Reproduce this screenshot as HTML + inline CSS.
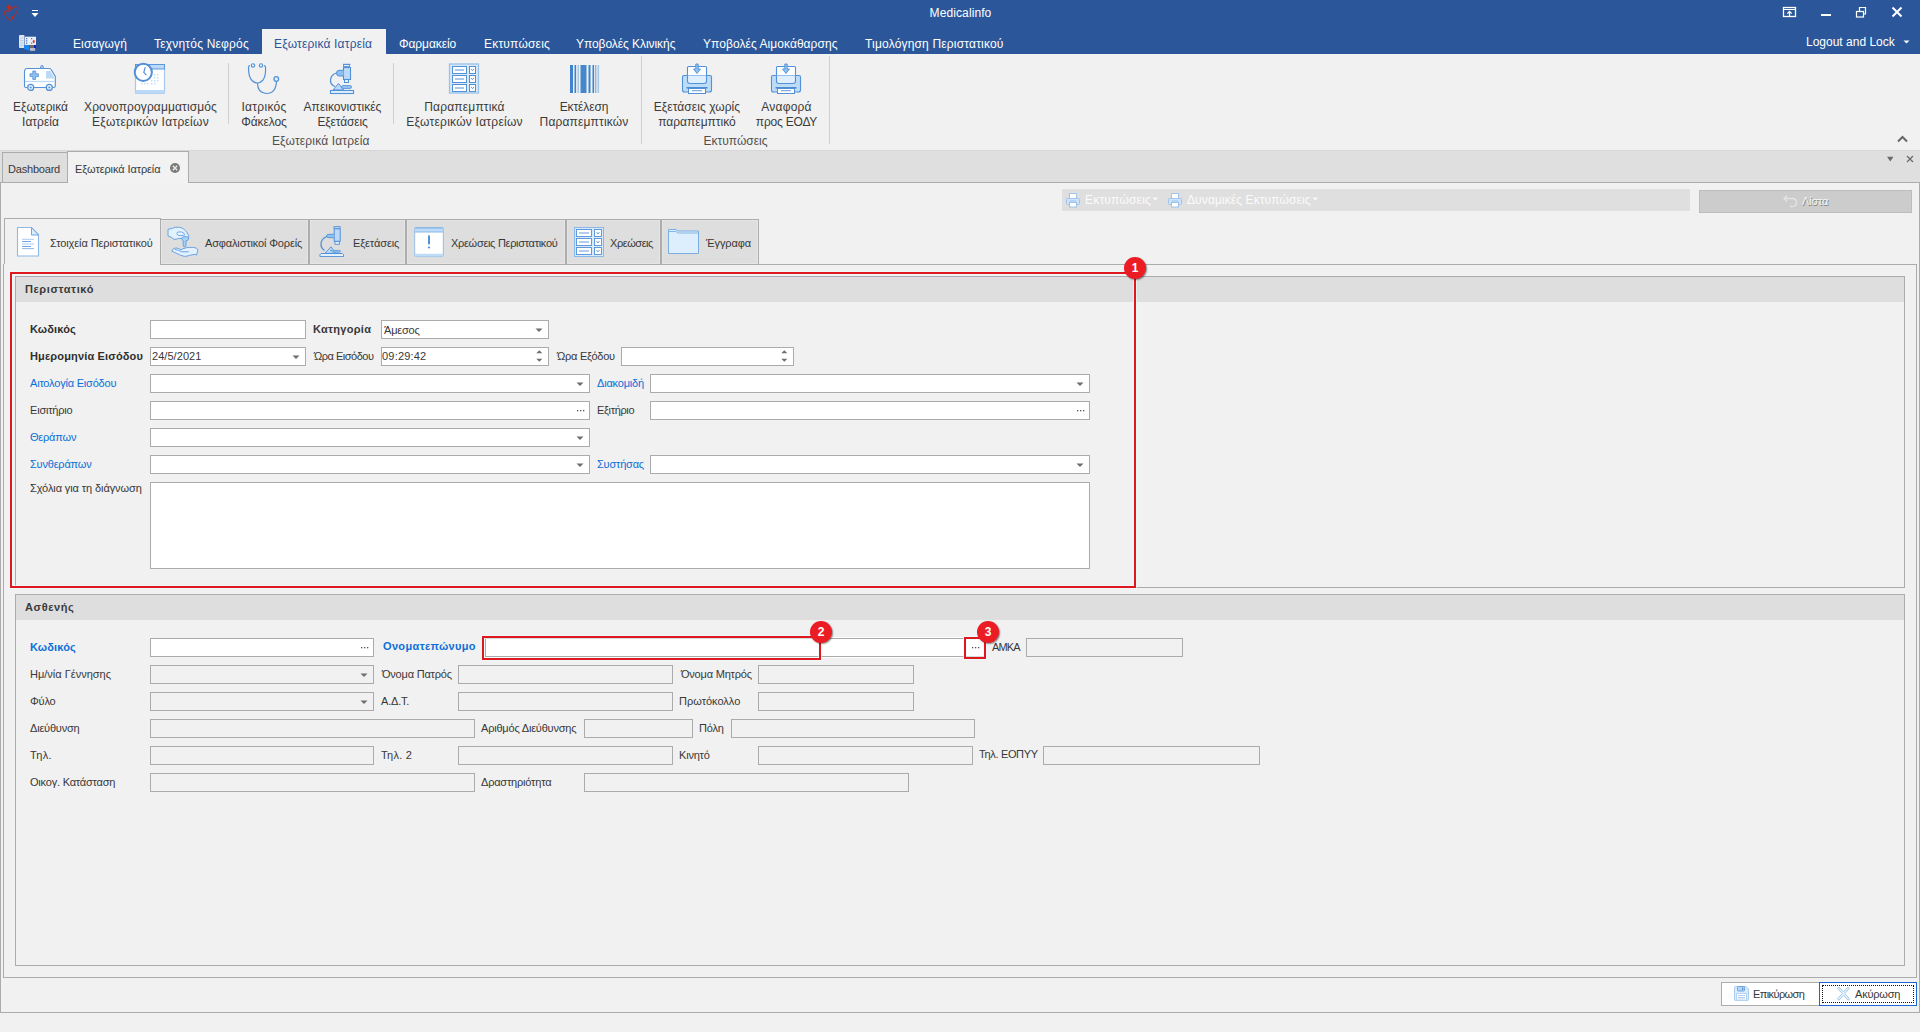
<!DOCTYPE html><html><head><meta charset="utf-8"><style>
html,body{margin:0;padding:0;}
body{width:1920px;height:1032px;overflow:hidden;position:relative;background:#f1f1f1;font-family:"Liberation Sans", sans-serif;}
.t{position:absolute;white-space:nowrap;}
.r{position:absolute;}
</style></head><body>
<div class="r" style="left:0px;top:0px;width:1920px;height:54px;box-sizing:border-box;background:#2b579a;"></div>
<svg class="r" style="left:0px;top:0px;" width="22" height="24" viewBox="0 0 22 24"><path d="M9.6 11.3 Q7.5 10.6 5.5 11 Q3.6 11.6 4.3 13.5 Q5 16.5 7.8 18.6 Q9.6 20 11 20.6" fill="none" stroke="#c4281c" stroke-width="1.1" opacity="0.85"/><path d="M9.6 11.3 Q11.5 7.8 15 6.9 Q18 6.4 17.9 9 Q17.6 12 14.6 15.5 Q12.6 18 11 20.6" fill="none" stroke="#c4281c" stroke-width="1.1" opacity="0.85"/><ellipse cx="8.8" cy="7.3" rx="2.1" ry="2.5" fill="#c4281c"/><path d="M9.6 9 L9.3 14" stroke="#c4281c" stroke-width="0.9" opacity="0.8"/><circle cx="12.6" cy="17.6" r="1.4" fill="#c4281c"/></svg>
<div class="r" style="left:32px;top:10px;width:6px;height:1px;box-sizing:border-box;background:#fff;"></div>
<svg class="r" style="left:31px;top:13px;" width="8" height="5" viewBox="0 0 8 5"><path d="M0.5 0 L7.5 0 L4 4 Z" fill="#fff"/></svg>
<div class="t" style="left:810.5px;top:7px;width:300px;text-align:center;font-size:12px;line-height:12px;color:#fff;letter-spacing:0.1px;">Medicalinfo</div>
<svg class="r" style="left:1782px;top:6px;" width="15" height="12" viewBox="0 0 15 12"><rect x="1.5" y="1.5" width="12" height="9" fill="none" stroke="#fff" stroke-width="1.3"/><line x1="1.5" y1="3.5" x2="13.5" y2="3.5" stroke="#fff" stroke-width="1"/><path d="M7.5 10.5 V5.5 M5.3 7.6 L7.5 5.4 L9.7 7.6" fill="none" stroke="#fff" stroke-width="1.3"/></svg>
<div class="r" style="left:1821px;top:14px;width:10px;height:2px;box-sizing:border-box;background:#fff;"></div>
<svg class="r" style="left:1855px;top:6px;" width="12" height="12" viewBox="0 0 12 12"><rect x="1.5" y="5.5" width="7" height="5.5" fill="none" stroke="#fff" stroke-width="1.2"/><path d="M4.5 5 V1.5 H10.5 V8 H8.5" fill="none" stroke="#fff" stroke-width="1.2"/></svg>
<svg class="r" style="left:1891px;top:6px;" width="12" height="12" viewBox="0 0 12 12"><path d="M1.5 1.5 L10.5 10.5 M10.5 1.5 L1.5 10.5" stroke="#fff" stroke-width="2"/></svg>
<svg class="r" style="left:16px;top:32px;" width="24" height="22" viewBox="0 0 24 22"><rect x="3" y="3" width="5.5" height="13" rx="1" fill="#dfe6f3"/><path d="M4 6 h3.5 M4 8.5 h3.5 M4 11 h3.5 M4 13.5 h3.5" stroke="#b5c4df" stroke-width="0.8"/><rect x="9" y="4.7" width="11" height="8.3" fill="#e9eef8"/><g fill="#4d74b8"><rect x="10" y="6" width="1.2" height="1.2"/><rect x="15" y="6" width="1.2" height="1.2"/><rect x="10" y="8.3" width="1.2" height="1.2"/><rect x="10" y="10.6" width="1.2" height="1.2"/><rect x="15" y="10.6" width="1.2" height="1.2"/></g><path d="M16.5 9.5 L17.7 7.6 L18.9 9.5 L17.7 11.4 Z" fill="#e8443a"/><path d="M16.8 9.5 h1.8 M17.7 8.2 v2.6" stroke="#e8443a" stroke-width="1.2"/><path d="M8 13 H13 V18.5 L8 17 Z" fill="#1b86f0"/><rect x="13.5" y="13" width="6" height="6" fill="#6f6a62"/><rect x="14" y="16" width="5" height="2.8" fill="#b9bccb"/><rect x="18" y="13" width="2" height="3" fill="#1020d0"/></svg>
<div class="r" style="left:262px;top:29px;width:124px;height:25px;box-sizing:border-box;background:#f1f1f1;"></div>
<div class="t" style="left:274px;top:38px;font-size:12px;line-height:12px;color:#2b579a;letter-spacing:0.18px;">Εξωτερικά Ιατρεία</div>
<div class="t" style="left:73px;top:38px;font-size:12px;line-height:12px;color:#fff;letter-spacing:0.12px;">Εισαγωγή</div>
<div class="t" style="left:154px;top:38px;font-size:12px;line-height:12px;color:#fff;letter-spacing:0.2px;">Τεχνητός Νεφρός</div>
<div class="t" style="left:399px;top:38px;font-size:12px;line-height:12px;color:#fff;letter-spacing:-0.08px;">Φαρμακείο</div>
<div class="t" style="left:484px;top:38px;font-size:12px;line-height:12px;color:#fff;letter-spacing:0.2px;">Εκτυπώσεις</div>
<div class="t" style="left:576px;top:38px;font-size:12px;line-height:12px;color:#fff;letter-spacing:-0.06px;">Υποβολές Κλινικής</div>
<div class="t" style="left:703px;top:38px;font-size:12px;line-height:12px;color:#fff;letter-spacing:0.06px;">Υποβολές Αιμοκάθαρσης</div>
<div class="t" style="left:865px;top:38px;font-size:12px;line-height:12px;color:#fff;letter-spacing:0.18px;">Τιμολόγηση Περιστατικού</div>
<div class="t" style="left:1806px;top:36px;font-size:12px;line-height:12px;color:#fff;">Logout and Lock</div>
<svg class="r" style="left:1903px;top:40px;" width="7" height="5" viewBox="0 0 7 5"><path d="M0.5 0.5 H6.5 L3.5 3.5 Z" fill="#fff"/></svg>
<div class="r" style="left:0px;top:54px;width:1920px;height:96px;box-sizing:border-box;background:#f1f1f1;"></div>
<div class="r" style="left:0px;top:150px;width:1920px;height:1px;box-sizing:border-box;background:#d6d6d6;"></div>
<div class="t" style="left:-109.5px;top:101px;width:300px;text-align:center;font-size:12px;line-height:12px;color:#3b3b3b;letter-spacing:0px;">Εξωτερικά</div>
<div class="t" style="left:-109.5px;top:116px;width:300px;text-align:center;font-size:12px;line-height:12px;color:#3b3b3b;letter-spacing:0px;">Ιατρεία</div>
<div class="t" style="left:0.5px;top:101px;width:300px;text-align:center;font-size:12px;line-height:12px;color:#3b3b3b;letter-spacing:0.12px;">Χρονοπρογραμματισμός</div>
<div class="t" style="left:0.5px;top:116px;width:300px;text-align:center;font-size:12px;line-height:12px;color:#3b3b3b;letter-spacing:0.26px;">Εξωτερικών Ιατρείων</div>
<div class="t" style="left:114.0px;top:101px;width:300px;text-align:center;font-size:12px;line-height:12px;color:#3b3b3b;letter-spacing:0.3px;">Ιατρικός</div>
<div class="t" style="left:114.0px;top:116px;width:300px;text-align:center;font-size:12px;line-height:12px;color:#3b3b3b;letter-spacing:-0.08px;">Φάκελος</div>
<div class="t" style="left:192.5px;top:101px;width:300px;text-align:center;font-size:12px;line-height:12px;color:#3b3b3b;letter-spacing:0.03px;">Απεικονιστικές</div>
<div class="t" style="left:192.5px;top:116px;width:300px;text-align:center;font-size:12px;line-height:12px;color:#3b3b3b;letter-spacing:-0.15px;">Εξετάσεις</div>
<div class="t" style="left:314.5px;top:101px;width:300px;text-align:center;font-size:12px;line-height:12px;color:#3b3b3b;letter-spacing:0.17px;">Παραπεμπτικά</div>
<div class="t" style="left:314.5px;top:116px;width:300px;text-align:center;font-size:12px;line-height:12px;color:#3b3b3b;letter-spacing:0.24px;">Εξωτερικών Ιατρείων</div>
<div class="t" style="left:434.0px;top:101px;width:300px;text-align:center;font-size:12px;line-height:12px;color:#3b3b3b;letter-spacing:-0.1px;">Εκτέλεση</div>
<div class="t" style="left:434.0px;top:116px;width:300px;text-align:center;font-size:12px;line-height:12px;color:#3b3b3b;letter-spacing:0.15px;">Παραπεμπτικών</div>
<div class="t" style="left:547.0px;top:101px;width:300px;text-align:center;font-size:12px;line-height:12px;color:#3b3b3b;letter-spacing:0.07px;">Εξετάσεις χωρίς</div>
<div class="t" style="left:547.0px;top:116px;width:300px;text-align:center;font-size:12px;line-height:12px;color:#3b3b3b;letter-spacing:0px;">παραπεμπτικό</div>
<div class="t" style="left:636.5px;top:101px;width:300px;text-align:center;font-size:12px;line-height:12px;color:#3b3b3b;letter-spacing:0.2px;">Αναφορά</div>
<div class="t" style="left:636.5px;top:116px;width:300px;text-align:center;font-size:12px;line-height:12px;color:#3b3b3b;letter-spacing:-0.2px;">προς ΕΟΔΥ</div>
<div class="t" style="left:170.75px;top:135px;width:300px;text-align:center;font-size:12px;line-height:12px;color:#505050;letter-spacing:0.15px;">Εξωτερικά Ιατρεία</div>
<div class="t" style="left:585.5px;top:135px;width:300px;text-align:center;font-size:12px;line-height:12px;color:#505050;">Εκτυπώσεις</div>
<div class="r" style="left:228px;top:63px;width:1px;height:61px;box-sizing:border-box;background:#d0d0d0;"></div>
<div class="r" style="left:393px;top:63px;width:1px;height:61px;box-sizing:border-box;background:#d0d0d0;"></div>
<div class="r" style="left:641px;top:56px;width:1px;height:88px;box-sizing:border-box;background:#d0d0d0;"></div>
<div class="r" style="left:829px;top:56px;width:1px;height:88px;box-sizing:border-box;background:#d0d0d0;"></div>
<svg class="r" style="left:1897px;top:135px;" width="11" height="8" viewBox="0 0 11 8"><path d="M1 6.5 L5.5 2 L10 6.5" fill="none" stroke="#666" stroke-width="2"/></svg>
<svg class="r" style="left:22px;top:61px;" width="36" height="32" viewBox="0 0 36 32"><path d="M3 9 Q3 7.5 5 7.5 H27.5 Q28.5 7.5 29.3 8.8 L33.3 15.5 V24.8 Q33.3 26.5 31.5 26.5 H4 Q2.5 26.5 2.5 25 V10 Z" fill="#fff" stroke="#5291d7" stroke-width="1.1"/>
<path d="M24 10 H28.5 L32.8 17.5 H24 Z" fill="#bcdaf8"/>
<line x1="3" y1="20.5" x2="33" y2="20.5" stroke="#bcdaf8" stroke-width="1.3"/>
<path d="M10.8 10 h2.8 v2.8 h2.8 v2.8 h-2.8 v2.8 h-2.8 v-2.8 h-2.8 v-2.8 h2.8 Z" fill="#8fc0f0" stroke="#5291d7" stroke-width="0.8"/>
<path d="M18.3 7.3 L19.3 4.5 H20.7 L21.7 7.3 Z" fill="#bcdaf8" stroke="#5291d7" stroke-width="0.9"/>
<circle cx="8.7" cy="26.4" r="3" fill="#e8f2fd" stroke="#5291d7" stroke-width="1.2"/><circle cx="8.7" cy="26.4" r="1" fill="#5291d7"/>
<circle cx="27.3" cy="26.4" r="3" fill="#e8f2fd" stroke="#5291d7" stroke-width="1.2"/><circle cx="27.3" cy="26.4" r="1" fill="#5291d7"/></svg>
<svg class="r" style="left:132px;top:60px;" width="36" height="36" viewBox="0 0 36 36"><rect x="3.5" y="4.5" width="29" height="29" rx="1" fill="#fff" stroke="#a9c8ea" stroke-width="1.2"/>
<rect x="3.5" y="4.5" width="29" height="4.5" fill="#bcdaf8" stroke="#5291d7" stroke-width="0.9"/>
<rect x="3.5" y="30" width="29" height="3.5" fill="#bcdaf8"/>
<g fill="#bcd9f6"><rect x="22" y="14" width="1.4" height="1.4"/><rect x="25" y="14" width="1.4" height="1.4"/><rect x="22" y="17" width="1.4" height="1.4"/><rect x="25" y="17" width="1.4" height="1.4"/><rect x="19" y="20" width="1.4" height="1.4"/><rect x="22" y="20" width="1.4" height="1.4"/><rect x="25" y="20" width="1.4" height="1.4"/><rect x="9" y="23" width="1.4" height="1.4"/><rect x="12" y="23" width="1.4" height="1.4"/><rect x="15" y="23" width="1.4" height="1.4"/><rect x="19" y="23" width="1.4" height="1.4"/><rect x="22" y="23" width="1.4" height="1.4"/></g>
<circle cx="11.3" cy="12.3" r="8.6" fill="#fff" stroke="#5291d7" stroke-width="2"/>
<path d="M13.3 7.2 L11.8 12.3 L14.4 15.1" fill="none" stroke="#5291d7" stroke-width="1.2"/></svg>
<svg class="r" style="left:246px;top:60px;" width="36" height="36" viewBox="0 0 36 36"><path d="M4 5.5 Q2.5 5.5 2.5 8 Q2.5 17 6 20.5 Q8.5 23 11.5 23 Q14.5 23 17 20 Q20 16 19.5 7 Q19.5 6 18 5.5" fill="none" stroke="#5291d7" stroke-width="1.2"/>
<circle cx="7" cy="5.5" r="1.7" fill="#e3f2fd" stroke="#5291d7" stroke-width="1.1"/><circle cx="15" cy="5.5" r="1.7" fill="#e3f2fd" stroke="#5291d7" stroke-width="1.1"/>
<path d="M11.5 23 Q11.5 33 20.5 33.5 Q30 33.5 30.5 21" fill="none" stroke="#5291d7" stroke-width="1.2"/>
<circle cx="30.3" cy="19" r="2.3" fill="#e3f2fd" stroke="#5291d7" stroke-width="1.3"/></svg>
<svg class="r" style="left:326px;top:60px;" width="36" height="36" viewBox="0 0 36 36"><rect x="17.5" y="4.5" width="6" height="2" fill="#e3f2fd" stroke="#5291d7" stroke-width="0.9"/><line x1="17" y1="4.3" x2="24.5" y2="4.3" stroke="#5291d7" stroke-width="1"/>
<rect x="17.5" y="7.5" width="7" height="12" fill="#bcdaf8" stroke="#5291d7" stroke-width="1.1"/>
<rect x="18.5" y="19.5" width="4" height="3" fill="#e3f2fd" stroke="#5291d7" stroke-width="1"/>
<path d="M17.5 10.3 H13 Q10.5 10.5 10.5 13 Q10.5 16 13 16 H17.5" fill="#8dc1f2" stroke="#5291d7" stroke-width="1"/>
<path d="M10.5 13 Q4.5 15 4.5 20.5 Q4.5 25 9 26.5" fill="none" stroke="#5291d7" stroke-width="1.3"/>
<path d="M7 30 L12.5 23.5 L17.5 30 Z" fill="#bcdaf8" stroke="#5291d7" stroke-width="1"/>
<rect x="15.5" y="25.5" width="10" height="3" rx="1.5" fill="#8dc1f2" stroke="#5291d7" stroke-width="0.8"/>
<rect x="4.5" y="30.5" width="23" height="3" fill="#e3f2fd" stroke="#5291d7" stroke-width="1.1"/></svg>
<svg class="r" style="left:446px;top:60px;" width="36" height="36" viewBox="0 0 36 36"><rect x="3.5" y="4" width="29" height="29" fill="#d7e9fb" stroke="#9cc2e8" stroke-width="1.3"/><rect x="6.5" y="6.5" width="14" height="7" fill="#fff" stroke="#5291d7" stroke-width="1"/><line x1="9" y1="10" x2="18" y2="10" stroke="#5291d7" stroke-width="1"/><rect x="23.5" y="6.5" width="6" height="7" fill="#fff" stroke="#5291d7" stroke-width="1"/><path d="M25.2 9 L26.5 10.7 L27.8 9" fill="none" stroke="#5291d7" stroke-width="0.9"/><rect x="6.5" y="15.5" width="14" height="7" fill="#fff" stroke="#5291d7" stroke-width="1"/><line x1="9" y1="19" x2="18" y2="19" stroke="#5291d7" stroke-width="1"/><rect x="23.5" y="15.5" width="6" height="7" fill="#fff" stroke="#5291d7" stroke-width="1"/><path d="M25.2 18 L26.5 19.7 L27.8 18" fill="none" stroke="#5291d7" stroke-width="0.9"/><rect x="6.5" y="24.5" width="14" height="7" fill="#fff" stroke="#5291d7" stroke-width="1"/><line x1="9" y1="28" x2="18" y2="28" stroke="#5291d7" stroke-width="1"/><rect x="23.5" y="24.5" width="6" height="7" fill="#fff" stroke="#5291d7" stroke-width="1"/><path d="M25.2 27 L26.5 28.7 L27.8 27" fill="none" stroke="#5291d7" stroke-width="0.9"/></svg>
<svg class="r" style="left:566px;top:60px;" width="36" height="36" viewBox="0 0 36 36"><rect x="4" y="5" width="3" height="28" fill="#3f84cb"/><rect x="8.5" y="5" width="1.6" height="28" fill="#3f84cb"/><rect x="11.5" y="5" width="1.5" height="28" fill="#a6c7e6"/><rect x="14.5" y="5" width="6" height="28" fill="#4487cb"/><rect x="22.5" y="5" width="2" height="28" fill="#3f84cb"/><rect x="26.5" y="5" width="1.6" height="28" fill="#3f84cb"/><rect x="29.3" y="5" width="1" height="28" fill="#6aa0d8"/><rect x="31.5" y="5" width="1.6" height="28" fill="#a6c7e6"/></svg>
<svg class="r" style="left:679px;top:60px;" width="36" height="36" viewBox="0 0 36 36"><rect x="8.5" y="6.5" width="19" height="17" rx="1" fill="#fff" stroke="#5291d7" stroke-width="1.1"/>
<path d="M3.5 17 Q3.5 15.5 5 15.5 H31 Q32.5 15.5 32.5 17 V30 Q32.5 32 30.5 32 H5.5 Q3.5 32 3.5 30 Z" fill="#bcdcf8" stroke="#5291d7" stroke-width="1.1"/>
<path d="M8.5 15.5 V21 Q8.5 23.5 11 23.5 H25 Q27.5 23.5 27.5 21 V15.5" fill="#e0effd" stroke="#5291d7" stroke-width="1.1"/>
<line x1="7.5" y1="27.8" x2="28.5" y2="27.8" stroke="#3f84cb" stroke-width="1.4"/>
<rect x="9.5" y="28.5" width="17" height="5" fill="#fff" stroke="#5291d7" stroke-width="1"/><line x1="13" y1="30.7" x2="23" y2="30.7" stroke="#5291d7" stroke-width="0.9"/>
<path d="M16.8 4 H19.2 V9 H21.5 L18 13.5 L14.5 9 H16.8 Z" fill="#8dc1f2" stroke="#5291d7" stroke-width="0.9"/></svg>
<svg class="r" style="left:768px;top:60px;" width="36" height="36" viewBox="0 0 36 36"><rect x="8.5" y="6.5" width="19" height="17" rx="1" fill="#fff" stroke="#5291d7" stroke-width="1.1"/>
<path d="M3.5 17 Q3.5 15.5 5 15.5 H31 Q32.5 15.5 32.5 17 V30 Q32.5 32 30.5 32 H5.5 Q3.5 32 3.5 30 Z" fill="#bcdcf8" stroke="#5291d7" stroke-width="1.1"/>
<path d="M8.5 15.5 V21 Q8.5 23.5 11 23.5 H25 Q27.5 23.5 27.5 21 V15.5" fill="#e0effd" stroke="#5291d7" stroke-width="1.1"/>
<line x1="7.5" y1="27.8" x2="28.5" y2="27.8" stroke="#3f84cb" stroke-width="1.4"/>
<rect x="9.5" y="28.5" width="17" height="5" fill="#fff" stroke="#5291d7" stroke-width="1"/><line x1="13" y1="30.7" x2="23" y2="30.7" stroke="#5291d7" stroke-width="0.9"/>
<path d="M16.8 4 H19.2 V9 H21.5 L18 13.5 L14.5 9 H16.8 Z" fill="#8dc1f2" stroke="#5291d7" stroke-width="0.9"/></svg>
<div class="r" style="left:0px;top:151px;width:1920px;height:31px;box-sizing:border-box;background:#dfdfdf;"></div>
<div class="r" style="left:0px;top:182px;width:1920px;height:1px;box-sizing:border-box;background:#acacac;"></div>
<div class="r" style="left:2px;top:152px;width:66px;height:31px;box-sizing:border-box;background:#dedede;border:1px solid #acacac;"></div>
<div class="r" style="left:67px;top:151px;width:122px;height:32px;box-sizing:border-box;background:#f2f2f2;border:1px solid #acacac;border-bottom:none;"></div>
<div class="t" style="left:8px;top:164px;font-size:11px;line-height:11px;color:#3a3a3a;letter-spacing:-0.2px;">Dashboard</div>
<div class="t" style="left:75px;top:164px;font-size:11px;line-height:11px;color:#3a3a3a;letter-spacing:-0.1px;">Εξωτερικά Ιατρεία</div>
<svg class="r" style="left:169px;top:162px;" width="12" height="12" viewBox="0 0 12 12"><circle cx="6" cy="6" r="5" fill="#7a7a7a"/><path d="M3.8 3.8 L8.2 8.2 M8.2 3.8 L3.8 8.2" stroke="#e8e8e8" stroke-width="1.4"/></svg>
<svg class="r" style="left:1886px;top:156px;" width="9" height="7" viewBox="0 0 9 7"><path d="M1 0.8 H7.5 L4.25 5.5 Z" fill="#6a6a6a"/></svg>
<svg class="r" style="left:1906px;top:155px;" width="8" height="8" viewBox="0 0 8 8"><path d="M1 1 L7 7 M7 1 L1 7" stroke="#6a6a6a" stroke-width="1.3"/></svg>
<div class="r" style="left:0px;top:182px;width:1px;height:831px;box-sizing:border-box;background:#acacac;"></div>
<div class="r" style="left:1919px;top:182px;width:1px;height:831px;box-sizing:border-box;background:#acacac;"></div>
<div class="r" style="left:0px;top:1012px;width:1920px;height:1px;box-sizing:border-box;background:#acacac;"></div>
<div class="r" style="left:1062px;top:189px;width:628px;height:22px;box-sizing:border-box;background:#dfdfdf;"></div>
<svg class="r" style="left:1065px;top:192px;" width="16" height="16" viewBox="0 0 16 16"><rect x="4.5" y="1.5" width="7" height="5" fill="#fff" stroke="#9cc4ec"/><rect x="1.5" y="6.5" width="13" height="6" rx="1" fill="#cfe4fa" stroke="#9cc4ec"/><line x1="4.5" y1="9" x2="11.5" y2="9" stroke="#9cc4ec"/><rect x="4.5" y="10.5" width="7" height="4.5" fill="#fff" stroke="#9cc4ec"/></svg>
<svg class="r" style="left:1167px;top:192px;" width="16" height="16" viewBox="0 0 16 16"><rect x="4.5" y="1.5" width="7" height="5" fill="#fff" stroke="#9cc4ec"/><rect x="1.5" y="6.5" width="13" height="6" rx="1" fill="#cfe4fa" stroke="#9cc4ec"/><line x1="4.5" y1="9" x2="11.5" y2="9" stroke="#9cc4ec"/><rect x="4.5" y="10.5" width="7" height="4.5" fill="#fff" stroke="#9cc4ec"/></svg>
<div class="t" style="left:1085px;top:194px;font-size:12px;line-height:12px;color:#fbfbfb;letter-spacing:0.2px;">Εκτυπώσεις</div>
<div class="t" style="left:1187px;top:194px;font-size:12px;line-height:12px;color:#fbfbfb;letter-spacing:0.1px;">Δυναμικές Εκτυπώσεις</div>
<svg class="r" style="left:1152px;top:197px;" width="7" height="5" viewBox="0 0 7 5"><path d="M0.5 0.5 H6 L3.25 3.5 Z" fill="#fafafa"/></svg>
<svg class="r" style="left:1312px;top:197px;" width="7" height="5" viewBox="0 0 7 5"><path d="M0.5 0.5 H6 L3.25 3.5 Z" fill="#fafafa"/></svg>
<div class="r" style="left:1699px;top:190px;width:213px;height:23px;box-sizing:border-box;background:#cccccc;border:1px solid #bdbdbd;"></div>
<svg class="r" style="left:1782px;top:194px;" width="17" height="14" viewBox="0 0 17 14"><path d="M2 4.5 H10 Q14.5 4.5 14.5 8.5 Q14.5 12.5 10 12.5 H8" fill="none" stroke="#e4e4e4" stroke-width="1.3"/><path d="M5 1.5 L2 4.5 L5 7.5" fill="none" stroke="#e4e4e4" stroke-width="1.3"/></svg>
<div class="t" style="left:1802px;top:196px;font-size:11px;line-height:11px;color:#f6f6f6;letter-spacing:-0.2px;text-shadow:0.7px 0.7px 0 #7a7a7a;">Λίστα</div>
<div class="r" style="left:3px;top:264px;width:1914px;height:714px;box-sizing:border-box;border:1px solid #acacac;"></div>
<div class="r" style="left:160px;top:219px;width:149px;height:46px;box-sizing:border-box;background:#dedede;border:1px solid #acacac;box-shadow:inset 0 0 0 1px #e5e5e5;"></div>
<div class="r" style="left:309px;top:219px;width:97px;height:46px;box-sizing:border-box;background:#dedede;border:1px solid #acacac;box-shadow:inset 0 0 0 1px #e5e5e5;"></div>
<div class="r" style="left:406px;top:219px;width:160px;height:46px;box-sizing:border-box;background:#dedede;border:1px solid #acacac;box-shadow:inset 0 0 0 1px #e5e5e5;"></div>
<div class="r" style="left:566px;top:219px;width:95px;height:46px;box-sizing:border-box;background:#dedede;border:1px solid #acacac;box-shadow:inset 0 0 0 1px #e5e5e5;"></div>
<div class="r" style="left:661px;top:219px;width:98px;height:46px;box-sizing:border-box;background:#dedede;border:1px solid #acacac;box-shadow:inset 0 0 0 1px #e5e5e5;"></div>
<div class="r" style="left:4px;top:218px;width:157px;height:47px;box-sizing:border-box;background:#f1f1f1;border:1px solid #acacac;border-bottom:none;"></div>
<div class="r" style="left:4px;top:264px;width:156px;height:1px;box-sizing:border-box;background:#f1f1f1;"></div>
<div class="t" style="left:50px;top:238px;font-size:11px;line-height:11px;color:#383838;letter-spacing:-0.1px;">Στοιχεία Περιστατικού</div>
<div class="t" style="left:205px;top:238px;font-size:11px;line-height:11px;color:#383838;letter-spacing:-0.15px;">Ασφαλιστικοί Φορείς</div>
<div class="t" style="left:353px;top:238px;font-size:11px;line-height:11px;color:#383838;letter-spacing:-0.1px;">Εξετάσεις</div>
<div class="t" style="left:451px;top:238px;font-size:11px;line-height:11px;color:#383838;letter-spacing:-0.3px;">Χρεώσεις Περιστατικού</div>
<div class="t" style="left:610px;top:238px;font-size:11px;line-height:11px;color:#383838;letter-spacing:-0.45px;">Χρεώσεις</div>
<div class="t" style="left:706px;top:238px;font-size:11px;line-height:11px;color:#383838;letter-spacing:-0.1px;">Έγγραφα</div>
<svg class="r" style="left:16px;top:226px;" width="24" height="32" viewBox="0 0 24 32"><path d="M1.5 1.5 H15.5 L22.5 8.5 V30 H1.5 Z" fill="#fff" stroke="#8fb8e6" stroke-width="1.1"/><path d="M15.5 1.5 V9 H22.5 Z" fill="#dcedfd" stroke="#6fa4e0" stroke-width="1"/>
<g stroke-width="1"><line x1="6" y1="13.3" x2="18" y2="13.3" stroke="#a9cbef"/><line x1="6" y1="15.5" x2="15" y2="15.5" stroke="#6fa4e0"/><line x1="6" y1="18" x2="18" y2="18" stroke="#a9cbef"/><line x1="6" y1="20.5" x2="15" y2="20.5" stroke="#6fa4e0"/><line x1="6" y1="22.6" x2="18" y2="22.6" stroke="#8ab8e8"/></g></svg>
<svg class="r" style="left:165px;top:224px;" width="36" height="36" viewBox="0 0 36 36"><path d="M3 5.2 Q5 5 7 4.5 Q9 3.4 10.5 3.3 H14.6 Q17 3.6 18.8 5.2 Q20.8 6.6 21.6 8 L23.7 11.5 Q24.2 13 23 14 L19.5 13.6 Q18 14.2 16.7 14.3 L13.3 14.6 Q11 15.6 9 15.3 Q7.8 14.5 7 13.8 Q5 12.6 3 12 Z" fill="#e2f1fd" stroke="#5b9be0" stroke-width="0.9"/>
<path d="M12 9.3 Q12 8 13.5 8 H16.5 Q18.5 8.3 19.8 10.8 Q19 11.6 16.8 11.4 H13.5 Q12 11.2 12 9.3 Z" fill="#eef7ff" stroke="#5b9be0" stroke-width="0.9"/>
<path d="M18.5 12.8 Q21.5 12.3 23.6 13.2 Q24 15.5 22.5 16.6 L21 16.8 V21.8 Q21 22.8 19.5 22.8 Q18.2 22.8 18.2 21.8 V16.6 Q16.4 15.8 16.7 14.3 Q17.2 13 18.5 12.8 Z" fill="#a5d1f7" stroke="#5b9be0" stroke-width="0.9"/>
<path d="M7.3 25.8 Q9 24 11.2 24 Q14 24.3 16 25.8 Q17.5 24.8 19 24.4 Q22 23.4 24.4 23.4 Q28 23.3 30 23.7 Q32 24.4 33 25.8 L31.5 31.2 Q30.8 30.5 30 30.3 Q27 30.8 24.4 31.4 Q22 32.3 19.5 32.4 Q15.5 31.5 12.2 29.6 Q9 28.3 7 27.2 Z" fill="#e2f1fd" stroke="#5b9be0" stroke-width="0.9"/>
<path d="M10 25.5 Q13.5 26 16.7 27.8 H23.7" fill="none" stroke="#5b9be0" stroke-width="0.9"/></svg>
<svg class="r" style="left:319px;top:226px;" width="25" height="31" viewBox="0 0 25 31"><rect x="15" y="0.6" width="6" height="1.6" fill="#e3f2fd" stroke="#5291d7" stroke-width="0.9"/>
<rect x="15.2" y="2.8" width="6" height="12.5" fill="#bcdaf8" stroke="#5291d7" stroke-width="1"/>
<rect x="16" y="15.5" width="4.4" height="2.8" fill="#e3f2fd" stroke="#5291d7" stroke-width="0.9"/>
<path d="M15.2 8.3 H10 Q7.5 8.3 7.5 10 Q7.5 11.7 10 11.7 H15.2" fill="#8dc1f2" stroke="#5291d7" stroke-width="0.9"/>
<path d="M8 10.5 Q2 12.5 2 18.5 Q2.2 22.5 5.5 24.5" fill="none" stroke="#5291d7" stroke-width="1.3"/>
<path d="M6 27.3 L12 20.8 L16.5 27.3 Z" fill="#bcdaf8" stroke="#5291d7" stroke-width="0.9"/><circle cx="12" cy="24.6" r="0.8" fill="#5291d7"/>
<rect x="13.5" y="24.4" width="8" height="1.8" rx="0.9" fill="#8dc1f2" stroke="#5291d7" stroke-width="0.7"/>
<path d="M2 27.5 H23.5 L24.6 28.6 V30.6 H1 V28.6 Z" fill="#e3f2fd" stroke="#5291d7" stroke-width="1"/></svg>
<svg class="r" style="left:414px;top:227px;" width="30" height="30" viewBox="0 0 30 30"><rect x="0.6" y="0.6" width="28.8" height="28.8" rx="1.5" fill="#fff" stroke="#a3c5e8" stroke-width="1.2"/><rect x="1" y="1" width="28" height="4" rx="1" fill="#bcdcf8"/><line x1="1" y1="5" x2="29" y2="5" stroke="#8ab8e8" stroke-width="1"/><line x1="1" y1="1" x2="29" y2="1" stroke="#7aaee3" stroke-width="1"/><rect x="1" y="26.8" width="28" height="2.5" fill="#bcdcf8"/>
<rect x="14" y="8.2" width="2" height="9.3" rx="0.8" fill="#5291d7"/><circle cx="15" cy="20.5" r="1.1" fill="#5291d7"/></svg>
<svg class="r" style="left:574px;top:227px;" width="30" height="30" viewBox="0 0 30 30"><rect x="0.5" y="0.5" width="29" height="29" fill="#d7e9fb" stroke="#8ab8e8" stroke-width="1"/><rect x="2.5" y="2.5" width="15" height="7" fill="#fff" stroke="#5291d7" stroke-width="0.9"/><line x1="5" y1="6" x2="15" y2="6" stroke="#5291d7" stroke-width="0.9"/><rect x="20.5" y="2.5" width="7" height="7" fill="#fff" stroke="#5291d7" stroke-width="0.9"/><path d="M22.5 5 L24 7 L25.5 5" fill="none" stroke="#5291d7" stroke-width="0.8"/><rect x="2.5" y="11.5" width="15" height="7" fill="#fff" stroke="#5291d7" stroke-width="0.9"/><line x1="5" y1="15" x2="15" y2="15" stroke="#5291d7" stroke-width="0.9"/><rect x="20.5" y="11.5" width="7" height="7" fill="#fff" stroke="#5291d7" stroke-width="0.9"/><path d="M22.5 14 L24 16 L25.5 14" fill="none" stroke="#5291d7" stroke-width="0.8"/><rect x="2.5" y="20.5" width="15" height="7" fill="#fff" stroke="#5291d7" stroke-width="0.9"/><line x1="5" y1="24" x2="15" y2="24" stroke="#5291d7" stroke-width="0.9"/><rect x="20.5" y="20.5" width="7" height="7" fill="#fff" stroke="#5291d7" stroke-width="0.9"/><path d="M22.5 23 L24 25 L25.5 23" fill="none" stroke="#5291d7" stroke-width="0.8"/></svg>
<svg class="r" style="left:668px;top:228px;" width="32" height="27" viewBox="0 0 32 27"><path d="M0.5 1.5 H8 L10 3 H30.5 V25.5 H0.5 Z" fill="#ddeefc" stroke="#7aaee3" stroke-width="1"/><path d="M0.5 3.5 H8 L10 5 H30.5" fill="none" stroke="#7aaee3" stroke-width="0.9"/></svg>
<div class="r" style="left:15px;top:276px;width:1890px;height:312px;box-sizing:border-box;border:1px solid #acacac;"></div>
<div class="r" style="left:16px;top:277px;width:1888px;height:25px;box-sizing:border-box;background:#dedede;"></div>
<div class="t" style="left:25px;top:284px;font-size:11px;line-height:11px;font-weight:bold;color:#3a3a3a;letter-spacing:0.6px;">Περιστατικό</div>
<div class="t" style="left:30px;top:324px;font-size:11px;line-height:11px;font-weight:bold;color:#2e2e2e;letter-spacing:0.15px;">Κωδικός</div>
<div class="r" style="left:150px;top:320px;width:156px;height:19px;box-sizing:border-box;background:#fff;border:1px solid #ababab;"></div>
<div class="t" style="left:313px;top:324px;font-size:11px;line-height:11px;font-weight:bold;color:#383838;letter-spacing:0.3px;">Κατηγορία</div>
<div class="r" style="left:381px;top:320px;width:168px;height:19px;box-sizing:border-box;background:#fff;border:1px solid #ababab;"></div>
<div class="t" style="left:384px;top:325px;font-size:11px;line-height:11px;color:#383838;letter-spacing:-0.2px;">Άμεσος</div>
<svg class="r" style="left:535px;top:328px;" width="8" height="5" viewBox="0 0 8 5"><path d="M0.5 0.5 H7.5 L4 4 Z" fill="#6e6e6e"/></svg>
<div class="t" style="left:30px;top:351px;font-size:11px;line-height:11px;font-weight:bold;color:#2e2e2e;letter-spacing:0.15px;">Ημερομηνία Εισόδου</div>
<div class="r" style="left:150px;top:347px;width:156px;height:19px;box-sizing:border-box;background:#fff;border:1px solid #ababab;"></div>
<div class="t" style="left:152px;top:351px;font-size:11px;line-height:11px;color:#383838;letter-spacing:0.05px;">24/5/2021</div>
<svg class="r" style="left:292px;top:355px;" width="8" height="5" viewBox="0 0 8 5"><path d="M0.5 0.5 H7.5 L4 4 Z" fill="#6e6e6e"/></svg>
<div class="t" style="left:314px;top:351px;font-size:11px;line-height:11px;color:#383838;letter-spacing:-0.5px;">Ώρα Εισόδου</div>
<div class="r" style="left:381px;top:347px;width:168px;height:19px;box-sizing:border-box;background:#fff;border:1px solid #ababab;"></div>
<div class="t" style="left:382px;top:351px;font-size:11px;line-height:11px;color:#383838;letter-spacing:0.2px;">09:29:42</div>
<svg class="r" style="left:536px;top:350px;" width="7" height="13" viewBox="0 0 7 13"><path d="M0.3 3.3 H6.3 L3.3 0.3 Z M0.3 8.7 H6.3 L3.3 11.7 Z" fill="#6e6e6e"/></svg>
<div class="t" style="left:557px;top:351px;font-size:11px;line-height:11px;color:#383838;letter-spacing:-0.25px;">Ώρα Εξόδου</div>
<div class="r" style="left:621px;top:347px;width:173px;height:19px;box-sizing:border-box;background:#fff;border:1px solid #ababab;"></div>
<svg class="r" style="left:781px;top:350px;" width="7" height="13" viewBox="0 0 7 13"><path d="M0.3 3.3 H6.3 L3.3 0.3 Z M0.3 8.7 H6.3 L3.3 11.7 Z" fill="#6e6e6e"/></svg>
<div class="t" style="left:30px;top:378px;font-size:11px;line-height:11px;color:#0b6fd8;letter-spacing:-0.2px;">Αιτολογία Εισόδου</div>
<div class="r" style="left:150px;top:374px;width:440px;height:19px;box-sizing:border-box;background:#fff;border:1px solid #ababab;"></div>
<svg class="r" style="left:576px;top:382px;" width="8" height="5" viewBox="0 0 8 5"><path d="M0.5 0.5 H7.5 L4 4 Z" fill="#6e6e6e"/></svg>
<div class="t" style="left:597px;top:378px;font-size:11px;line-height:11px;color:#0b6fd8;letter-spacing:-0.2px;">Διακομιδή</div>
<div class="r" style="left:650px;top:374px;width:440px;height:19px;box-sizing:border-box;background:#fff;border:1px solid #ababab;"></div>
<svg class="r" style="left:1076px;top:382px;" width="8" height="5" viewBox="0 0 8 5"><path d="M0.5 0.5 H7.5 L4 4 Z" fill="#6e6e6e"/></svg>
<div class="t" style="left:30px;top:405px;font-size:11px;line-height:11px;color:#383838;letter-spacing:-0.2px;">Εισιτήριο</div>
<div class="r" style="left:150px;top:401px;width:440px;height:19px;box-sizing:border-box;background:#fff;border:1px solid #ababab;"></div>
<div class="t" style="left:577px;top:410px;"><svg width="9" height="2" style="display:block"><rect x="0" y="0" width="1.3" height="1.3" fill="#505050"/><rect x="3" y="0" width="1.3" height="1.3" fill="#505050"/><rect x="6" y="0" width="1.3" height="1.3" fill="#505050"/></svg></div>
<div class="t" style="left:597px;top:405px;font-size:11px;line-height:11px;color:#383838;letter-spacing:-0.35px;">Εξιτήριο</div>
<div class="r" style="left:650px;top:401px;width:440px;height:19px;box-sizing:border-box;background:#fff;border:1px solid #ababab;"></div>
<div class="t" style="left:1077px;top:410px;"><svg width="9" height="2" style="display:block"><rect x="0" y="0" width="1.3" height="1.3" fill="#505050"/><rect x="3" y="0" width="1.3" height="1.3" fill="#505050"/><rect x="6" y="0" width="1.3" height="1.3" fill="#505050"/></svg></div>
<div class="t" style="left:30px;top:432px;font-size:11px;line-height:11px;color:#0b6fd8;letter-spacing:-0.2px;">Θεράπων</div>
<div class="r" style="left:150px;top:428px;width:440px;height:19px;box-sizing:border-box;background:#fff;border:1px solid #ababab;"></div>
<svg class="r" style="left:576px;top:436px;" width="8" height="5" viewBox="0 0 8 5"><path d="M0.5 0.5 H7.5 L4 4 Z" fill="#6e6e6e"/></svg>
<div class="t" style="left:30px;top:459px;font-size:11px;line-height:11px;color:#0b6fd8;letter-spacing:-0.2px;">Συνθεράπων</div>
<div class="r" style="left:150px;top:455px;width:440px;height:19px;box-sizing:border-box;background:#fff;border:1px solid #ababab;"></div>
<svg class="r" style="left:576px;top:463px;" width="8" height="5" viewBox="0 0 8 5"><path d="M0.5 0.5 H7.5 L4 4 Z" fill="#6e6e6e"/></svg>
<div class="t" style="left:597px;top:459px;font-size:11px;line-height:11px;color:#0b6fd8;letter-spacing:-0.2px;">Συστήσας</div>
<div class="r" style="left:650px;top:455px;width:440px;height:19px;box-sizing:border-box;background:#fff;border:1px solid #ababab;"></div>
<svg class="r" style="left:1076px;top:463px;" width="8" height="5" viewBox="0 0 8 5"><path d="M0.5 0.5 H7.5 L4 4 Z" fill="#6e6e6e"/></svg>
<div class="t" style="left:30px;top:483px;font-size:11px;line-height:11px;color:#383838;letter-spacing:-0.1px;">Σχόλια για τη διάγνωση</div>
<div class="r" style="left:150px;top:482px;width:940px;height:87px;box-sizing:border-box;background:#fff;border:1px solid #ababab;"></div>
<div class="r" style="left:15px;top:594px;width:1890px;height:372px;box-sizing:border-box;border:1px solid #acacac;"></div>
<div class="r" style="left:16px;top:595px;width:1888px;height:25px;box-sizing:border-box;background:#dedede;"></div>
<div class="t" style="left:25px;top:602px;font-size:11px;line-height:11px;font-weight:bold;color:#3a3a3a;letter-spacing:0.6px;">Ασθενής</div>
<div class="t" style="left:30px;top:642px;font-size:11px;line-height:11px;font-weight:bold;color:#0b6fd8;letter-spacing:0.15px;">Κωδικός</div>
<div class="r" style="left:150px;top:638px;width:224px;height:19px;box-sizing:border-box;background:#fff;border:1px solid #ababab;"></div>
<div class="t" style="left:361px;top:647px;"><svg width="9" height="2" style="display:block"><rect x="0" y="0" width="1.3" height="1.3" fill="#505050"/><rect x="3" y="0" width="1.3" height="1.3" fill="#505050"/><rect x="6" y="0" width="1.3" height="1.3" fill="#505050"/></svg></div>
<div class="t" style="left:383px;top:641px;font-size:11px;line-height:11px;font-weight:bold;color:#0b6fd8;letter-spacing:0.35px;">Ονοματεπώνυμο</div>
<div class="r" style="left:484px;top:637px;width:482px;height:21px;box-sizing:border-box;background:#fff;"></div>
<div class="r" style="left:485px;top:638px;width:500px;height:19px;box-sizing:border-box;background:#fff;border:1px solid #ababab;"></div>
<div class="t" style="left:972px;top:647px;"><svg width="9" height="2" style="display:block"><rect x="0" y="0" width="1.3" height="1.3" fill="#505050"/><rect x="3" y="0" width="1.3" height="1.3" fill="#505050"/><rect x="6" y="0" width="1.3" height="1.3" fill="#505050"/></svg></div>
<div class="t" style="left:992px;top:642px;font-size:11px;line-height:11px;color:#383838;letter-spacing:-0.9px;">ΑΜΚΑ</div>
<div class="r" style="left:1026px;top:638px;width:157px;height:19px;box-sizing:border-box;background:#f1f1f1;border:1px solid #ababab;"></div>
<div class="t" style="left:30px;top:669px;font-size:11px;line-height:11px;color:#383838;letter-spacing:0px;">Ημ/νία Γέννησης</div>
<div class="r" style="left:150px;top:665px;width:224px;height:19px;box-sizing:border-box;background:#f1f1f1;border:1px solid #ababab;"></div>
<svg class="r" style="left:360px;top:673px;" width="8" height="5" viewBox="0 0 8 5"><path d="M0.5 0.5 H7.5 L4 4 Z" fill="#6e6e6e"/></svg>
<div class="t" style="left:382px;top:669px;font-size:11px;line-height:11px;color:#383838;letter-spacing:-0.2px;">Όνομα Πατρός</div>
<div class="r" style="left:458px;top:665px;width:215px;height:19px;box-sizing:border-box;background:#f1f1f1;border:1px solid #ababab;"></div>
<div class="t" style="left:681px;top:669px;font-size:11px;line-height:11px;color:#383838;letter-spacing:-0.2px;">Όνομα Μητρός</div>
<div class="r" style="left:758px;top:665px;width:156px;height:19px;box-sizing:border-box;background:#f1f1f1;border:1px solid #ababab;"></div>
<div class="t" style="left:30px;top:696px;font-size:11px;line-height:11px;color:#383838;letter-spacing:-0.2px;">Φύλο</div>
<div class="r" style="left:150px;top:692px;width:224px;height:19px;box-sizing:border-box;background:#f1f1f1;border:1px solid #ababab;"></div>
<svg class="r" style="left:360px;top:700px;" width="8" height="5" viewBox="0 0 8 5"><path d="M0.5 0.5 H7.5 L4 4 Z" fill="#6e6e6e"/></svg>
<div class="t" style="left:381px;top:696px;font-size:11px;line-height:11px;color:#383838;letter-spacing:-0.2px;">Α.Δ.Τ.</div>
<div class="r" style="left:458px;top:692px;width:215px;height:19px;box-sizing:border-box;background:#f1f1f1;border:1px solid #ababab;"></div>
<div class="t" style="left:679px;top:696px;font-size:11px;line-height:11px;color:#383838;letter-spacing:0px;">Πρωτόκολλο</div>
<div class="r" style="left:758px;top:692px;width:156px;height:19px;box-sizing:border-box;background:#f1f1f1;border:1px solid #ababab;"></div>
<div class="t" style="left:30px;top:723px;font-size:11px;line-height:11px;color:#383838;letter-spacing:-0.2px;">Διεύθυνση</div>
<div class="r" style="left:150px;top:719px;width:325px;height:19px;box-sizing:border-box;background:#f1f1f1;border:1px solid #ababab;"></div>
<div class="t" style="left:481px;top:723px;font-size:11px;line-height:11px;color:#383838;letter-spacing:-0.2px;">Αριθμός Διεύθυνσης</div>
<div class="r" style="left:584px;top:719px;width:109px;height:19px;box-sizing:border-box;background:#f1f1f1;border:1px solid #ababab;"></div>
<div class="t" style="left:699px;top:723px;font-size:11px;line-height:11px;color:#383838;letter-spacing:-0.2px;">Πόλη</div>
<div class="r" style="left:731px;top:719px;width:244px;height:19px;box-sizing:border-box;background:#f1f1f1;border:1px solid #ababab;"></div>
<div class="t" style="left:30px;top:750px;font-size:11px;line-height:11px;color:#383838;letter-spacing:0.3px;">Τηλ.</div>
<div class="r" style="left:150px;top:746px;width:224px;height:19px;box-sizing:border-box;background:#f1f1f1;border:1px solid #ababab;"></div>
<div class="t" style="left:381px;top:750px;font-size:11px;line-height:11px;color:#383838;letter-spacing:0.2px;">Τηλ. 2</div>
<div class="r" style="left:458px;top:746px;width:215px;height:19px;box-sizing:border-box;background:#f1f1f1;border:1px solid #ababab;"></div>
<div class="t" style="left:679px;top:750px;font-size:11px;line-height:11px;color:#383838;letter-spacing:-0.2px;">Κινητό</div>
<div class="r" style="left:758px;top:746px;width:215px;height:19px;box-sizing:border-box;background:#f1f1f1;border:1px solid #ababab;"></div>
<div class="t" style="left:979px;top:749px;font-size:11px;line-height:11px;color:#383838;letter-spacing:-0.35px;">Τηλ. ΕΟΠΥΥ</div>
<div class="r" style="left:1043px;top:746px;width:217px;height:19px;box-sizing:border-box;background:#f1f1f1;border:1px solid #ababab;"></div>
<div class="t" style="left:30px;top:777px;font-size:11px;line-height:11px;color:#383838;letter-spacing:-0.2px;">Οικογ. Κατάσταση</div>
<div class="r" style="left:150px;top:773px;width:325px;height:19px;box-sizing:border-box;background:#f1f1f1;border:1px solid #ababab;"></div>
<div class="t" style="left:481px;top:777px;font-size:11px;line-height:11px;color:#383838;letter-spacing:-0.2px;">Δραστηριότητα</div>
<div class="r" style="left:584px;top:773px;width:325px;height:19px;box-sizing:border-box;background:#f1f1f1;border:1px solid #ababab;"></div>
<div class="r" style="left:10px;top:272px;width:1126px;height:316px;box-sizing:border-box;border:2px solid #df1820;box-shadow:0 0 0 1px rgba(240,252,252,0.6), inset 0 0 0 1px rgba(240,252,252,0.6);"></div>
<div class="r" style="left:482px;top:636px;width:339px;height:24px;box-sizing:border-box;border:2px solid #df1820;box-shadow:0 0 0 1px rgba(240,252,252,0.6), inset 0 0 0 1px rgba(240,252,252,0.6);"></div>
<div class="r" style="left:964px;top:637px;width:22px;height:22px;box-sizing:border-box;border:2px solid #df1820;box-shadow:0 0 0 1px rgba(240,252,252,0.6), inset 0 0 0 1px rgba(240,252,252,0.6);"></div>
<div class="r" style="left:1124px;top:257px;width:22px;height:22px;border-radius:50%;background:#ec1c24;box-shadow:1px 1px 1.5px rgba(0,0,0,0.45);"></div>
<div class="t" style="left:1124.0px;top:262px;width:22px;text-align:center;font-size:12px;line-height:12px;color:#fff;font-weight:bold;">1</div>
<div class="r" style="left:810px;top:621px;width:22px;height:22px;border-radius:50%;background:#ec1c24;box-shadow:1px 1px 1.5px rgba(0,0,0,0.45);"></div>
<div class="t" style="left:810.0px;top:626px;width:22px;text-align:center;font-size:12px;line-height:12px;color:#fff;font-weight:bold;">2</div>
<div class="r" style="left:977px;top:621px;width:22px;height:22px;border-radius:50%;background:#ec1c24;box-shadow:1px 1px 1.5px rgba(0,0,0,0.45);"></div>
<div class="t" style="left:977.0px;top:626px;width:22px;text-align:center;font-size:12px;line-height:12px;color:#fff;font-weight:bold;">3</div>
<div class="r" style="left:1721px;top:982px;width:99px;height:24px;box-sizing:border-box;background:#fff;border:1px solid #acacac;"></div>
<div class="r" style="left:1819px;top:982px;width:98px;height:24px;box-sizing:border-box;background:#fff;border:1px solid #1a66d2;"></div>
<div class="r" style="left:1822px;top:985px;width:92px;height:18px;box-sizing:border-box;border:1px dotted #111;"></div>
<svg class="r" style="left:1733px;top:985px;" width="17" height="17" viewBox="0 0 17 17"><path d="M1.5 2.5 Q1.5 1.5 2.5 1.5 H13 L15.5 4 V14.5 Q15.5 15.5 14.5 15.5 H2.5 Q1.5 15.5 1.5 14.5 Z" fill="#dcecfc" stroke="#a9cbef"/><rect x="4.5" y="1.5" width="7" height="4.5" rx="0.8" fill="#b3d6f7" stroke="#6fa4e0"/><rect x="9" y="2.5" width="1.2" height="2.5" fill="#5b95d8"/><rect x="3.5" y="8.5" width="10" height="7" fill="#fff" stroke="#b5d4f2"/><line x1="5" y1="10.5" x2="12" y2="10.5" stroke="#b0cfee"/><line x1="5" y1="12.5" x2="12" y2="12.5" stroke="#b0cfee"/><rect x="4.5" y="13" width="8" height="2" fill="#dde9f5"/></svg>
<div class="t" style="left:1753px;top:989px;font-size:11px;line-height:11px;color:#383838;letter-spacing:-0.6px;">Επικύρωση</div>
<svg class="r" style="left:1836px;top:986px;" width="15" height="16" viewBox="0 0 15 16"><path d="M1.5 2.3 L2.8 1 L7.5 5.8 L12.2 1 L13.5 2.3 L8.8 7.6 L13.5 12.9 L12.2 14.3 L7.5 9.4 L2.8 14.3 L1.5 12.9 L6.2 7.6 Z" fill="#e3f1fd" stroke="#9cc4ec" stroke-width="0.9" stroke-linejoin="round"/></svg>
<div class="t" style="left:1855px;top:989px;font-size:11px;line-height:11px;color:#383838;letter-spacing:-0.2px;">Ακύρωση</div>
</body></html>
